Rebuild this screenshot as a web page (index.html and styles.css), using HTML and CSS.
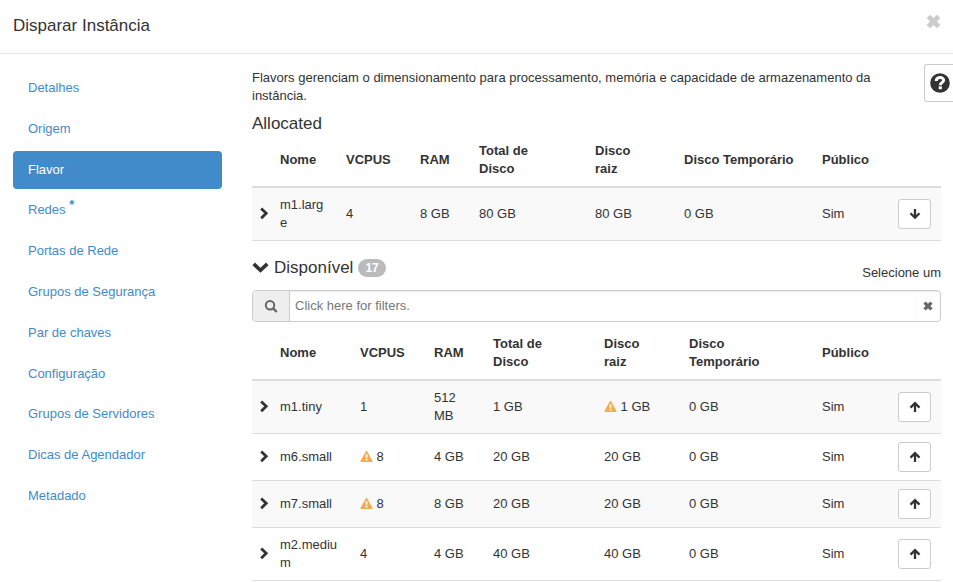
FILE: index.html
```html
<!DOCTYPE html>
<html lang="pt-BR">
<head>
<meta charset="utf-8">
<title>Disparar Instância</title>
<meta name="viewport" content="width=device-width, initial-scale=1">
<link rel="stylesheet" href="styles.css">
</head>
<body>
<svg class="sprite" aria-hidden="true">
  <symbol id="right" viewBox="0 0 12 14"><path d="M3.200 1.400 8.200 6.300l-5 4.900" fill="none" stroke="currentColor" stroke-width="2.800"/></symbol>
  <symbol id="down" viewBox="0 0 16 14"><path d="M1.600 3.600 8 9.600l6.400-6" fill="none" stroke="currentColor" stroke-width="3.400"/></symbol>
  <symbol id="arrow-up" viewBox="0 0 12 12"><path d="M6 11V3M1.500 6.600 6 2.100l4.500 4.500" fill="none" stroke="currentColor" stroke-width="2.300"/></symbol>
  <symbol id="arrow-down" viewBox="0 0 12 12"><path d="M6 1v8M1.500 5.200 6 9.700l4.500-4.500" fill="none" stroke="currentColor" stroke-width="2.300"/></symbol>
  <symbol id="cross" viewBox="0 0 14 14"><path d="M3.800.6 7 3.800 10.200.6 13.400 3.800 10.200 7l3.200 3.200-3.200 3.200L7 10.200l-3.200 3.200L.6 10.200 3.800 7 .6 3.800z" fill="currentColor"/></symbol>
  <symbol id="search" viewBox="0 0 14 14"><circle cx="6" cy="6.200" r="4.200" fill="none" stroke="currentColor" stroke-width="2"/><path d="m9.200 9.400 3.600 3.600" stroke="currentColor" stroke-width="2.400"/></symbol>
  <symbol id="warn" viewBox="0 0 14 13"><path d="M6.400.8Q7 0 7.600.8l5.900 10.600q.4 1-.6 1.100H1.100q-1-.1-.6-1.100z" fill="#f0ad4e"/><path d="M6 4h2.100v3.800H6zM6 9h2.100v1.900H6z" fill="#fff" fill-opacity=".85"/></symbol>
  <symbol id="help" viewBox="0 0 20 20"><circle cx="10" cy="10" r="9.800" fill="currentColor"/><path d="M6.200 8C6.200 3.400 13.600 3.400 13.600 7.300c0 2.400-3.300 2.300-3.300 4.900" fill="none" stroke="#fff" stroke-width="3"/><path d="M8.700 13.300h3.200v2.900H8.700z" fill="#fff"/></symbol>
</svg>

<header class="modal-header">
  <h1 class="title">Disparar Instância</h1>
  <button class="close" type="button" aria-label="Fechar"><svg class="icon-close"><use href="#cross"/></svg></button>
</header>

<div class="modal-body">
  <nav class="steps">
    <a class="step" href="#">Detalhes</a>
    <a class="step" href="#">Origem</a>
    <a class="step active" href="#" aria-current="step">Flavor</a>
    <a class="step" href="#">Redes <span class="required">*</span></a>
    <a class="step" href="#">Portas de Rede</a>
    <a class="step" href="#">Grupos de Segurança</a>
    <a class="step" href="#">Par de chaves</a>
    <a class="step" href="#">Configuração</a>
    <a class="step" href="#">Grupos de Servidores</a>
    <a class="step" href="#">Dicas de Agendador</a>
    <a class="step" href="#">Metadado</a>
  </nav>

  <main class="content">
    <p class="intro">Flavors gerenciam o dimensionamento para processamento, memória e capacidade de armazenamento da instância.</p>
    <h2 class="section-title">Allocated</h2>
    <table class="flavors allocated">
      <colgroup><col class="c-toggle"><col class="c-name"><col class="c-vcpus"><col class="c-ram"><col class="c-total"><col class="c-root"><col><col class="c-public"><col class="c-action"></colgroup>
      <thead>
        <tr><th></th><th>Nome</th><th>VCPUS</th><th>RAM</th><th>Total de<br>Disco</th><th>Disco<br>raiz</th><th>Disco Temporário</th><th>Público</th><th></th></tr>
      </thead>
      <tbody>
        <tr><td><button class="toggle" type="button" aria-label="Expandir"><svg><use href="#right"/></svg></button></td><td>m1.large</td><td>4</td><td>8 GB</td><td>80 GB</td><td>80 GB</td><td>0 GB</td><td>Sim</td><td><button class="move" type="button" aria-label="Remover"><svg><use href="#arrow-down"/></svg></button></td></tr>
      </tbody>
    </table>

    <div class="available-bar">
      <h2 class="section-title available-title"><svg class="icon-down"><use href="#down"/></svg>Disponível<span class="badge">17</span></h2>
      <span>Selecione um</span>
    </div>

    <div class="search">
      <label class="search-label" for="filter" aria-label="Filtro"><svg><use href="#search"/></svg></label>
      <input class="search-input" id="filter" type="text" placeholder="Click here for filters.">
      <button class="search-clear" type="button" aria-label="Limpar"><svg><use href="#cross"/></svg></button>
    </div>

    <table class="flavors available">
      <colgroup><col class="c-toggle"><col class="c-name"><col class="c-vcpus"><col class="c-ram"><col class="c-total"><col class="c-root"><col><col class="c-public"><col class="c-action"></colgroup>
      <thead>
        <tr><th></th><th>Nome</th><th>VCPUS</th><th>RAM</th><th>Total de<br>Disco</th><th>Disco<br>raiz</th><th>Disco<br>Temporário</th><th>Público</th><th></th></tr>
      </thead>
      <tbody>
        <tr><td><button class="toggle" type="button" aria-label="Expandir"><svg><use href="#right"/></svg></button></td><td>m1.tiny</td><td>1</td><td>512 MB</td><td>1 GB</td><td><svg class="warn"><use href="#warn"/></svg> 1 GB</td><td>0 GB</td><td>Sim</td><td><button class="move" type="button" aria-label="Alocar"><svg><use href="#arrow-up"/></svg></button></td></tr>
        <tr><td><button class="toggle" type="button" aria-label="Expandir"><svg><use href="#right"/></svg></button></td><td>m6.small</td><td><svg class="warn"><use href="#warn"/></svg> 8</td><td>4 GB</td><td>20 GB</td><td>20 GB</td><td>0 GB</td><td>Sim</td><td><button class="move" type="button" aria-label="Alocar"><svg><use href="#arrow-up"/></svg></button></td></tr>
        <tr><td><button class="toggle" type="button" aria-label="Expandir"><svg><use href="#right"/></svg></button></td><td>m7.small</td><td><svg class="warn"><use href="#warn"/></svg> 8</td><td>8 GB</td><td>20 GB</td><td>20 GB</td><td>0 GB</td><td>Sim</td><td><button class="move" type="button" aria-label="Alocar"><svg><use href="#arrow-up"/></svg></button></td></tr>
        <tr><td><button class="toggle" type="button" aria-label="Expandir"><svg><use href="#right"/></svg></button></td><td>m2.medium</td><td>4</td><td>4 GB</td><td>40 GB</td><td>40 GB</td><td>0 GB</td><td>Sim</td><td><button class="move" type="button" aria-label="Alocar"><svg><use href="#arrow-up"/></svg></button></td></tr>
      </tbody>
    </table>
  </main>
  <button class="help" type="button" aria-label="Ajuda"><svg><use href="#help"/></svg></button>
</div>
</body>
</html>
```
FILE: styles.css
```css
* { box-sizing: border-box; }

body {
  margin: 0;
  background: #fff;
  color: #333;
  font: 13px/18px "Liberation Sans", Arial, sans-serif;
}

.sprite { display: none; }
svg { display: block; }
button { padding: 0; border: 0; background: none; color: inherit; font: inherit; }

.modal-header {
  display: flex;
  justify-content: space-between;
  align-items: flex-start;
  padding: 14px 12px 16px 13px;
  border-bottom: 1px solid #e5e5e5;
}
.title, .section-title { margin: 0; font-size: 17px; font-weight: 400; }
.title { line-height: 23px; }
.close { color: #ccc; }
.icon-close { width: 15px; height: 15px; }

.modal-body {
  position: relative;
  display: flex;
  align-items: flex-start;
  gap: 30px;
  padding: 15px 12px 0 13px;
}

.steps {
  display: flex;
  flex-direction: column;
  justify-content: space-between;
  flex: 0 0 209px;
  min-height: 446px;
}
.step {
  padding: 10px 15px;
  border-radius: 4px;
  color: #428bca;
  text-decoration: none;
}
.step.active { background: #428bca; color: #fff; }
.required { font-weight: 700; vertical-align: 5px; line-height: 0; }

.content { flex: 1; min-width: 0; }
.intro { margin: 0 0 8px; padding-right: 48px; }
.section-title { line-height: 21px; }

.flavors {
  width: 100%;
  table-layout: fixed;
  border-collapse: separate;
  border-spacing: 0;
}
.flavors th, .flavors td {
  padding: 8px;
  text-align: left;
  vertical-align: middle;
  overflow-wrap: anywhere;
}
.flavors th { border-bottom: 2px solid #ddd; }
.flavors td { border-bottom: 1px solid #ddd; }
.flavors th:first-child, .flavors td:first-child { padding-right: 0; padding-left: 6px; }
.flavors tbody tr:nth-child(odd) { background: #f9f9f9; }

.c-toggle { width: 20px; }
.c-vcpus { width: 74px; }
.c-ram { width: 59px; }
.c-public { width: 76px; }
.c-action { width: 51px; }
.allocated .c-name { width: 66px; }
.allocated .c-total { width: 116px; }
.allocated .c-root { width: 89px; }
.available .c-name { width: 80px; }
.available .c-total { width: 111px; }
.available .c-root { width: 85px; }

.toggle { display: block; }
.toggle svg { width: 12px; height: 14px; }
.warn { display: inline-block; width: 13px; height: 13px; vertical-align: -2px; }

.move {
  display: flex;
  align-items: center;
  justify-content: center;
  width: 33px;
  height: 30px;
  border: 1px solid #ccc;
  border-radius: 3px;
  background: #fff;
}
.move svg { width: 12px; height: 12px; }

.available-bar {
  display: flex;
  justify-content: space-between;
  align-items: flex-end;
  padding: 16px 0 8px;
}
.available-title { display: flex; align-items: center; margin-bottom: 4px; }
.icon-down { width: 17px; height: 15px; margin-right: 5px; }
.badge {
  margin-left: 5px;
  padding: 0 7px;
  border-radius: 9px;
  background: #bbb;
  color: #fff;
  font-size: 12px;
  font-weight: 700;
  line-height: 18px;
}

.search {
  display: flex;
  height: 32px;
  margin-bottom: 5px;
  border: 1px solid #ccc;
  border-radius: 4px;
  color: #666;
  overflow: hidden;
}
.search-label {
  display: flex;
  align-items: center;
  justify-content: center;
  width: 37px;
  border-right: 1px solid #ccc;
  background: #eee;
}
.search-label svg { width: 14px; height: 14px; }
.search-input {
  flex: 1;
  min-width: 0;
  padding: 0 5px;
  border: 0;
  background: none;
  box-shadow: inset 0 1px 1px rgba(0, 0, 0, .08);
  color: #555;
  font: inherit;
}
.search-input::placeholder { color: #777; opacity: 1; }
.search-clear { padding: 0 7px; box-shadow: inset 0 1px 1px rgba(0, 0, 0, .08); }
.search-clear svg { width: 10px; height: 10px; }

.help {
  position: absolute;
  top: 10px;
  right: 0;
  display: flex;
  align-items: center;
  width: 29px;
  height: 38px;
  padding-left: 5px;
  border: 1px solid #ccc;
  border-right: 0;
  border-radius: 3px 0 0 3px;
  background: #fff;
}
.help svg { flex: none; width: 20px; height: 20px; }
```
